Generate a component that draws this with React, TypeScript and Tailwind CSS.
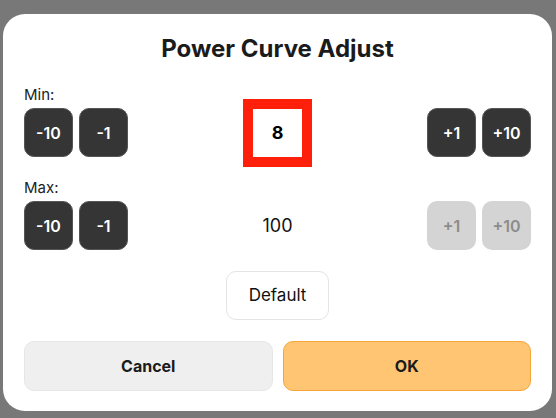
import React from 'react';

function StepButton({ label, disabled = false }: { label: string; disabled?: boolean }) {
  return (
    <button
      disabled={disabled}
      className={
        disabled
          ? 'h-[49px] min-w-[49px] px-2 rounded-[10px] bg-[#d4d4d4] text-[#8c8c8c] text-[16px] font-semibold'
          : 'h-[49px] min-w-[49px] px-2 rounded-[10px] bg-[#353535] border border-[#555] text-white text-[16px] font-semibold'
      }
    >
      {label}
    </button>
  );
}

function ValueRow({ label, value, maxed = false, highlight = false }: { label: string; value: number; maxed?: boolean; highlight?: boolean }) {
  return (
    <div className="flex flex-col">
      <div className="text-[15px] text-[#222] leading-[18px] mb-[4px]">{label}</div>
      <div className="flex items-center justify-between h-[49px]">
        <div className="flex gap-[6px]">
          <StepButton label="-10" />
          <StepButton label="-1" />
        </div>
        {highlight ? (
          <div className="w-[69px] h-[68px] border-[10px] border-[#ff200c] bg-white flex items-center justify-center text-[18px] font-bold text-black">
            {value}
          </div>
        ) : (
          <div className="w-[69px] flex items-center justify-center text-[18px] text-[#111]">{value}</div>
        )}
        <div className="flex gap-[6px]">
          <StepButton label="+1" disabled={maxed} />
          <StepButton label="+10" disabled={maxed} />
        </div>
      </div>
    </div>
  );
}

export default function App() {
  return (
    <div className="w-[556px] h-[418px] bg-[#787878] pt-[14px] pl-[3px] font-['Inter',sans-serif]">
      <div className="w-[549px] h-[397px] bg-white rounded-[22px] px-[21px] pt-[22px] flex flex-col">
        <h1 className="text-center text-[24px] font-bold text-[#1b1b1b] leading-[26px]">Power Curve Adjust</h1>
        <div className="mt-[24px] flex flex-col gap-[22px]">
          <ValueRow label="Min:" value={8} highlight />
          <ValueRow label="Max:" value={100} maxed />
        </div>
        <div className="mt-[21px] flex justify-center">
          <button className="w-[103px] h-[49px] rounded-[10px] border border-[#e4e4e4] bg-white text-[17px] text-[#111]">
            Default
          </button>
        </div>
        <div className="mt-[21px] flex gap-[10px]">
          <button className="flex-1 h-[50px] rounded-[10px] bg-[#efefef] border border-[#e6e6e6] text-[16px] font-bold text-[#1b1b1b]">
            Cancel
          </button>
          <button className="flex-1 h-[50px] rounded-[10px] bg-[#ffc572] border border-[#f5a53a] text-[16px] font-bold text-[#1b1b1b]">
            OK
          </button>
        </div>
      </div>
    </div>
  );
}
